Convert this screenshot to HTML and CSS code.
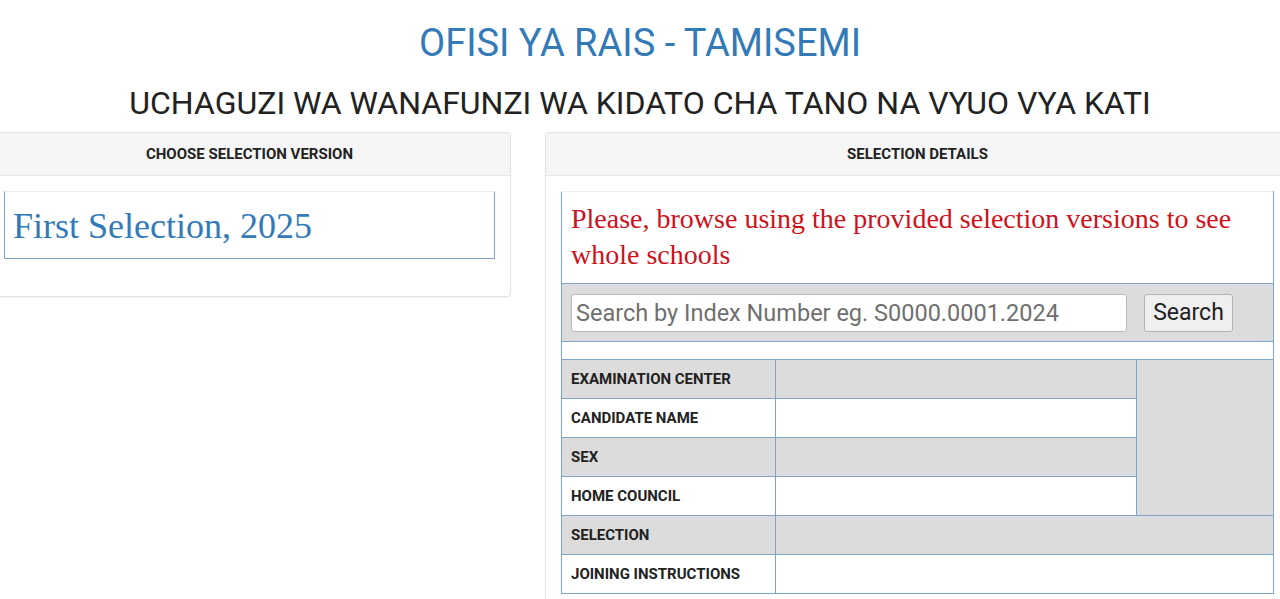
FILE: index.html
```html
<!DOCTYPE html>
<html>
<head>
<meta charset="utf-8">
<title>TAMISEMI Selection</title>
<link rel="stylesheet" href="styles.css">
</head>
<body>
<header class="page-head">
  <h1 class="title">OFISI YA RAIS - TAMISEMI</h1>
  <h2 class="subtitle">UCHAGUZI WA WANAFUNZI WA KIDATO CHA TANO NA VYUO VYA KATI</h2>
</header>
<div class="row">
  <section class="panel panel-left">
    <div class="panel-heading">CHOOSE SELECTION VERSION</div>
    <div class="panel-body">
      <div class="version-box">First Selection, 2025</div>
    </div>
  </section>
  <section class="panel panel-right">
    <div class="panel-heading">SELECTION DETAILS</div>
    <div class="panel-body">
      <table class="details">
        <colgroup>
          <col class="c-label">
          <col class="c-value">
          <col class="c-photo">
        </colgroup>
        <tr class="msg-row">
          <td colspan="3" class="msg">Please, browse using the provided selection versions to see whole schools</td>
        </tr>
        <tr class="search-row">
          <td colspan="3">
            <form class="search-form">
              <input class="search-input" type="text" placeholder="Search by Index Number eg. S0000.0001.2024">
              <button class="search-btn" type="button">Search</button>
            </form>
          </td>
        </tr>
        <tr class="spacer-row"><td colspan="3"></td></tr>
        <tr class="shade">
          <th>EXAMINATION CENTER</th>
          <td></td>
          <td rowspan="4" class="photo"></td>
        </tr>
        <tr>
          <th>CANDIDATE NAME</th>
          <td></td>
        </tr>
        <tr class="shade">
          <th>SEX</th>
          <td></td>
        </tr>
        <tr>
          <th>HOME COUNCIL</th>
          <td></td>
        </tr>
        <tr class="shade">
          <th>SELECTION</th>
          <td colspan="2"></td>
        </tr>
        <tr>
          <th>JOINING INSTRUCTIONS</th>
          <td colspan="2"></td>
        </tr>
      </table>
    </div>
  </section>
</div>
</body>
</html>
```
FILE: styles.css
```css
html {
  overflow: hidden;
}
body {
  margin: 0;
  background: #fff;
  font-family: Roboto, "Liberation Sans", sans-serif;
  color: #333;
}
.page-head {
  text-align: center;
}
.title {
  margin: 0;
  padding-top: 22px;
  font-size: 38px;
  font-weight: 400;
  line-height: 42px;
  color: #337ab7;
}
.subtitle {
  margin: 21px 0 0;
  font-size: 32px;
  font-weight: 400;
  line-height: 36px;
  color: #222;
}
.row {
  display: flex;
  gap: 34px;
  margin: 11px 0 0 -12px;
  width: 1302px;
}
.panel {
  background: #fff;
  border: 1px solid #e3e3e3;
  border-radius: 4px;
  box-shadow: 0 1px 2px rgba(0,0,0,0.06);
  align-self: flex-start;
}
.panel-left {
  width: 523px;
  box-sizing: border-box;
}
.panel-right {
  width: 745px;
  box-sizing: border-box;
}
.panel-heading {
  background: #f5f5f5;
  border-bottom: 1px solid #e6e6e6;
  height: 42px;
  line-height: 42px;
  text-align: center;
  font-size: 15px;
  font-weight: 700;
  color: #222;
  border-radius: 4px 4px 0 0;
}
.panel-body {
  padding: 15px 15px 17px;
}
.version-box {
  border: 1px solid #7ea6cc;
  border-top-color: #e8eef4;
  height: 66px;
  padding-left: 8px;
  font-family: "Liberation Serif", "DejaVu Serif", serif;
  font-size: 36px;
  line-height: 68px;
  color: #337ab7;
  margin-bottom: 20px;
}
.details {
  width: 100%;
  border-collapse: collapse;
  table-layout: fixed;
  border: 1px solid #7ea6cc;
}
.c-label { width: 214px; }
.c-value { width: 361px; }
.details td, .details th {
  border: 1px solid #7ea6cc;
  padding: 0 9px;
}
.details .msg-row td {
  border-top-color: #e8eef4;
}
.details td.msg {
  height: 92px;
  box-sizing: border-box;
  padding: 9px 9px 0;
  font-family: "Liberation Serif", "DejaVu Serif", serif;
  font-size: 28px;
  line-height: 36px;
  color: #d0101a;
  vertical-align: top;
}
.details .search-row td {
  background: #dcdcdc;
  height: 57px;
  padding: 0 9px;
}
.search-form {
  display: flex;
  align-items: center;
  gap: 17px;
  margin: 0;
}
.search-input {
  width: 556px;
  height: 38px;
  box-sizing: border-box;
  border: 1px solid #b9b9b9;
  border-radius: 3px;
  padding: 0 4px;
  font-family: Roboto, "Liberation Sans", sans-serif;
  font-size: 23.5px;
  color: #333;
  background: #fff;
}
.search-input::placeholder {
  color: #6f6f6f;
}
.search-btn {
  width: 89px;
  height: 38px;
  border: 1px solid #b3b3b3;
  border-radius: 3px;
  background: #efefef;
  font-family: Roboto, "Liberation Sans", sans-serif;
  font-size: 23px;
  color: #222;
  padding: 0;
}
.details .spacer-row td {
  height: 17px;
  padding: 0;
  background: #fff;
}
.details th {
  height: 38px;
  text-align: left;
  font-size: 15px;
  font-weight: 700;
  color: #222;
}
.details tr.shade th,
.details tr.shade td {
  background: #dcdcdc;
}
.details td.photo {
  background: #dcdcdc;
}
```
